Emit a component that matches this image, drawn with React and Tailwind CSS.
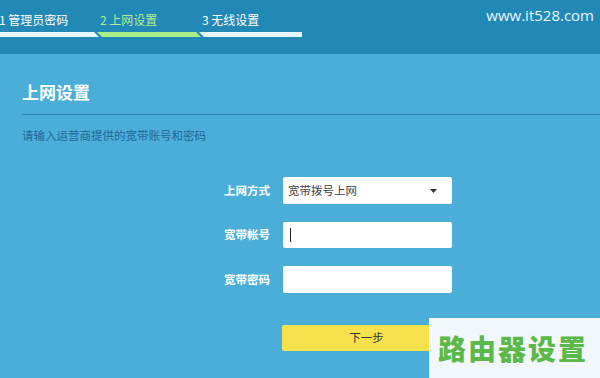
import React from "react";

export default function App() {
  const font = { fontFamily: '"Noto Sans CJK SC", "Noto Sans", sans-serif' };
  return (
    <div className="relative w-[600px] h-[378px] overflow-hidden bg-[#4aaed8]" style={font}>
      {/* top bar */}
      <div className="relative h-[54px] bg-[#2288b5]">
        <div className="flex items-start pt-[11px] text-[12px] leading-[18px] text-white">
          <div className="w-[101px] -ml-[1px]">1 管理员密码</div>
          <div className="w-[102px] text-[#aef08e]">2 上网设置</div>
          <div className="w-[100px]">3 无线设置</div>
        </div>
        <svg className="absolute left-0 top-[32px]" width="310" height="6" viewBox="0 0 310 6">
          <polygon points="0,0 94,0 99,5 0,5" fill="#e6f8ff" />
          <polygon points="97,0 196,0 201,5 102,5" fill="#a9ee86" />
          <polygon points="199,0 302,0 302,5 204,5" fill="#e6f8ff" />
        </svg>
        <div className="absolute right-[6px] top-[5px] text-[15px] leading-[20px] text-[#e8f7ff]" style={{ fontFamily: '"Open Sans", sans-serif' }}>
          www.it528.com
        </div>
      </div>

      {/* content */}
      <div className="pl-[22px] pt-[26px]">
        <div className="text-[17px] leading-[24px] font-bold text-white">上网设置</div>
        <div className="mt-[10px] h-[1px] bg-[#2c7fac]" />
        <div className="mt-[12px] text-[11.5px] leading-[16px] text-[#21699a]">请输入运营商提供的宽带账号和密码</div>

        <div className="mt-[34px] flex flex-col gap-[18px] text-[11.5px]">
          <div className="flex items-center">
            <div className="w-[261px] text-right pr-[13px] font-bold text-white">上网方式</div>
            <div className="w-[169px] h-[27px] bg-white rounded-[2px] flex items-center justify-between px-[5px] text-[#444]">
              <span>宽带拨号上网</span>
              <svg width="10" height="8" viewBox="0 0 10 8" className="mr-[8px]"><polygon points="1,2 8,2 4.5,6" fill="#333" /></svg>
            </div>
          </div>
          <div className="flex items-center">
            <div className="w-[261px] text-right pr-[13px] font-bold text-white">宽带帐号</div>
            <div className="w-[169px] h-[26px] bg-white rounded-[2px] flex items-center pl-[7px]">
              <div className="w-[1px] h-[14px] bg-[#222]" />
            </div>
          </div>
          <div className="flex items-center">
            <div className="w-[261px] text-right pr-[13px] font-bold text-white">宽带密码</div>
            <div className="w-[169px] h-[27px] bg-white rounded-[2px]" />
          </div>
        </div>

        <div className="mt-[32px] ml-[260px] w-[169px] h-[26px] rounded-[2px] bg-[#f6e24c] flex items-center justify-center text-[11.5px] text-[#333]">
          下一步
        </div>
      </div>

      {/* watermark */}
      <div className="absolute left-[429px] top-[318px] w-[171px] h-[60px] bg-[#f2f7fb] flex items-center pl-[9px]">
        <span className="whitespace-nowrap text-[28px] leading-[34px] font-black text-[#5cb848] tracking-[2px]">路由器设置</span>
      </div>
    </div>
  );
}
